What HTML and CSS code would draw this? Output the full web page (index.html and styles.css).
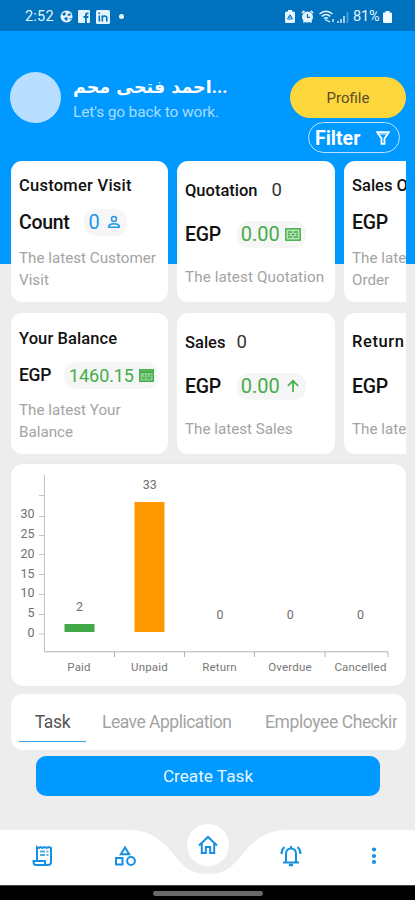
FILE: index.html
```html
<!DOCTYPE html>
<html lang="en">
<head>
<meta charset="utf-8">
<meta name="viewport" content="width=device-width, initial-scale=1">
<title>Dashboard</title>
<link rel="stylesheet" href="styles.css">
</head>
<body>
<div class="app">
  <div class="status">
    <span class="time">2:52</span>
    <svg class="st-globe" width="13" height="13" viewBox="0 0 13 13"><circle cx="6.500" cy="6.500" r="6" fill="#e4f4ff"/><path d="M2 4l3-2 1 2-2 2zM7 5l3-2 1 2-2 1zM4 8l3-1 1 2-2 2zM9.500 8l2 0-1 2z" fill="#0072bd"/></svg>
    <svg class="st-fb" width="12" height="13" viewBox="0 0 12 13"><rect width="12" height="13" rx="1" fill="#e4f4ff"/><path d="M7 13V8H5.500V6H7V4.500Q7 2.500 9 2.500h1.500v1.800H9.500q-.7 0-.7.7v1h1.700L10.200 8H8.800v5z" fill="#0072bd"/></svg>
    <svg class="st-in" width="14" height="14" viewBox="0 0 14 14"><rect width="14" height="14" rx="1.500" fill="#e4f4ff"/><path d="M3.300 5.500V11.500M3.300 2.500v1.600M6.300 11.500v-6M6.300 8q0-2 2.200-2T10.800 8v3.500" fill="none" stroke="#0072bd" stroke-width="1.600"/></svg>
    <span class="dot"></span>
    <span class="grow"></span>
    <svg class="st-saver" width="10" height="13" viewBox="0 0 10 13"><path d="M3 0h4v1.500h1.500Q10 1.500 10 3v8.500Q10 13 8.500 13h-7Q0 13 0 11.500V3Q0 1.500 1.500 1.500H3z" fill="#e4f4ff"/><path d="M2.500 9L5 4.800 7.500 9zM3.500 7h3" fill="none" stroke="#0072bd"/></svg>
    <svg class="st-alarm" width="13" height="13" viewBox="0 0 13 13"><circle cx="6.500" cy="7" r="5.500" fill="#e4f4ff"/><path d="M.8 3L3.400.8M12.200 3L9.600.8M2.500 12.500l1.500-2M10.500 12.500l-1.500-2" stroke="#e4f4ff" stroke-width="1.600"/><path d="M6.500 4v3.300H9" fill="none" stroke="#0072bd" stroke-width="1.200"/></svg>
    <svg class="st-wifi" width="15" height="13" viewBox="0 0 15 13"><path d="M.5 4Q7 -1.500 13.500 4M2.800 6.300Q7 2.800 11.200 6.300M5 8.500Q7 7 9 8.500" fill="none" stroke="#e4f4ff" stroke-width="1.500"/><path d="M6 9.500l5 2.500M14 9v3" stroke="#e4f4ff" stroke-width="1.300"/></svg>
    <svg class="st-signal" width="12" height="12" viewBox="0 0 12 12"><path d="M1 10v2M4 8v4M7 5v7" stroke="#cfeaff" stroke-width="1.500"/><path d="M10.500 1v11" stroke="#4fa6dc" stroke-width="1.500"/></svg>
    <span class="pct">81%</span>
    <svg class="st-batt" width="9" height="12" viewBox="0 0 9 12"><path d="M2.500 0h4v1.500H8q1 0 1 1V11q0 1-1 1H1q-1 0-1-1V2.500q0-1 1-1h1.500z" fill="#f2faff"/></svg>
  </div>

  <header class="header">
    <div class="avatar"></div>
    <div class="who">
      <div class="name">احمد فتحى محم<span class="more">...</span></div>
      <div class="hello">Let's go back to work.</div>
    </div>
    <div class="actions">
      <div class="profile">Profile</div>
      <div class="filter"><span>Filter</span><svg width="14" height="14" viewBox="0 0 14 14"><path d="M1.200 1.200h11.600L8.500 7.500v5.300h-3V7.500z" fill="none" stroke="#fff" stroke-width="1.800"/><path d="M3.500 3h7" stroke="#fff" stroke-width="1"/></svg></div>
    </div>
  </header>

  <section class="cards">
    <article class="card two">
      <h3 class="t-visit">Customer Visit</h3>
      <div class="row"><b class="count">Count</b><span class="pill blue p-count"><i>0</i><svg width="14" height="14" viewBox="0 0 14 14"><circle cx="7" cy="4" r="2.500" fill="none" stroke="currentColor" stroke-width="1.500"/><path d="M1.800 12.200v-1.400Q3 8.800 7 8.800t5.200 2v1.400z" fill="none" stroke="currentColor" stroke-width="1.500"/></svg></span></div>
      <p>The latest Customer<br>Visit</p>
    </article>
    <article class="card one">
      <h3>Quotation<em class="q">0</em></h3>
      <div class="row"><b>EGP</b><span class="pill p-amt"><i>0.00</i><svg width="16" height="13" viewBox="0 0 16 13"><rect x=".8" y=".8" width="14.400" height="11.400" fill="#b7e3b9" stroke="currentColor" stroke-width="1.400"/><path d="M3 4h4M8.500 4H13M3 6.500h2M6.500 6.500h3M11 6.500h2M3 9h4M8.500 9H13" stroke="currentColor" stroke-width="1.300"/></svg></span></div>
      <p class="p-quo">The latest Quotation</p>
    </article>
    <article class="card two">
      <h3>Sales Order</h3>
      <div class="row"><b>EGP</b></div>
      <p>The latest Sales<br>Order</p>
    </article>
    <article class="card two bal">
      <h3 class="t-bal">Your Balance</h3>
      <div class="row"><b class="egp-s">EGP</b><span class="pill p-bal"><i>1460.15</i><svg width="15" height="13" viewBox="0 0 15 13"><rect x=".7" y=".7" width="13.600" height="11.600" fill="#86cd89" stroke="currentColor" stroke-width="1.400"/><path d="M1 3h13" stroke="currentColor" stroke-width="2"/><path d="M3 9h3M5 6.500h1M8 6.500h1M8 9h4M11 6.500h1.500" stroke="currentColor" stroke-width="1.300"/></svg></span></div>
      <p class="p-up">The latest Your<br>Balance</p>
    </article>
    <article class="card one">
      <h3>Sales<em>0</em></h3>
      <div class="row"><b>EGP</b><span class="pill p-amt"><i>0.00</i><svg width="16" height="14" viewBox="0 0 16 14"><path d="M8 13V2M2.800 7L8 1.800 13.200 7" fill="none" stroke="currentColor" stroke-width="1.700"/></svg></span></div>
      <p>The latest Sales</p>
    </article>
    <article class="card one">
      <h3 class="t-ret">Return</h3>
      <div class="row"><b>EGP</b></div>
      <p>The latest Return</p>
    </article>
  </section>

  <section class="chart">
    <svg width="395" height="222" viewBox="0 0 395 222">
      <g stroke="#c4c4c4" fill="none">
        <path d="M33.500 11v177"/>
        <path d="M28 31.500h5M28 52.500h5M28 71.500h5M28 90.500h5M28 110.500h5M28 130.500h5M28 150.500h5M28 170h5"/>
        <path d="M33 187.800h344v5M103.500 188v5M173.500 188v5M243.500 188v5M314 188v5" stroke="#b3b3b3"/>
      </g>
      <rect x="53.500" y="160" width="30" height="8" fill="#43a847"/>
      <rect x="123.500" y="38" width="30" height="130" fill="#ff9800"/>
      <g class="axis" text-anchor="end">
        <text x="23.500" y="54">30</text><text x="23.500" y="74">25</text><text x="23.500" y="94">20</text><text x="23.500" y="113.700">15</text><text x="23.500" y="133">10</text><text x="23.500" y="153">5</text><text x="23.500" y="173">0</text>
      </g>
      <g class="vals" text-anchor="middle">
        <text x="68.500" y="147">2</text><text x="138.700" y="25">33</text><text x="209" y="155">0</text><text x="279.200" y="155">0</text><text x="349.500" y="155">0</text>
      </g>
      <g class="cats" text-anchor="middle">
        <text x="68" y="207">Paid</text><text x="138.500" y="207">Unpaid</text><text x="208.500" y="207">Return</text><text x="279" y="207">Overdue</text><text x="349.500" y="207">Cancelled</text>
      </g>
    </svg>
  </section>

  <nav class="tabs">
    <div class="tab active">Task</div>
    <div class="tab leave">Leave Application</div>
    <div class="tab emp">Employee Checkin</div>
  </nav>

  <div class="create">Create Task</div>

  <footer class="bottom">
    <svg width="415" height="65" viewBox="0 0 415 65">
      <path d="M0 10H128C147 10 158 17 169 29C181 43 187 54 208 54C229 54 235 43 247 29C258 17 269 10 288 10H415V65H0z" fill="#fff"/>
      <circle cx="208" cy="25" r="21" fill="#fff"/>
      <g fill="none" stroke="#1690e2" stroke-width="2">
        <path d="M37 40V27l1.500 1 2-1 2 1 2-1 2 1 2-1 2 1 .5-1V42q0 3-3 3H36q-2.500 0-2.500-3v-1H45v2q0 2 2.500 2"/>
        <path d="M40 31.500h5M40 35h5M46.500 31.500h2M46.500 35h2" stroke-width="2" opacity=".75"/>
        <path d="M125 27.500l-4.200 6.800h8.400z"/>
        <rect x="116" y="38" width="6.500" height="6.500"/>
        <circle cx="131" cy="41" r="3.900"/>
        <path d="M199 25.500l9-8.500 9 8.500M201.800 23.500V33h4v-6h4.400v6h4v-9.500"/>
        <path d="M283 42.500h16M286 42v-8q0-5.500 5-5.500t5 5.500v8M291 26v3M284.500 27q-3 2.500-3 7M297.500 27q3 2.500 3 7"/>
        <path d="M289 45h4" stroke-width="2.500"/>
      </g>
      <g fill="#1690e2"><circle cx="374" cy="29.500" r="2.100"/><circle cx="374" cy="36" r="2.100"/><circle cx="374" cy="42" r="2.100"/></g>
    </svg>
  </footer>
  <div class="gesture"><span></span></div>
</div>
</body>
</html>
```
FILE: styles.css
```css
* { box-sizing: border-box; }
body { margin: 0; font-family: Roboto, "Noto Sans", sans-serif; }
svg { display: block; flex: none; }
.app { width: 415px; height: 900px; overflow: hidden; display: flex; flex-direction: column; background: linear-gradient(#0099ff 264px, #ededed 264px); }
.app > * { flex: none; }

.status { height: 31px; background: #0072bd; display: flex; align-items: center; padding: 2px 23px 0 25px; color: #e4f4ff; }
.time { width: 35px; font-size: 14.5px; letter-spacing: .2px; white-space: nowrap; }
.st-fb { margin-left: 5px; }
.st-in { margin-left: 6px; }
.dot { width: 5px; height: 5px; border-radius: 50%; background: #e4f4ff; margin-left: 9px; }
.grow { flex: 1; }
.st-alarm { margin-left: 6px; }
.st-wifi { margin-left: 5px; }
.st-signal { margin-left: 3px; }
.pct { font-size: 14.5px; margin-left: 4px; width: 30px; letter-spacing: -.2px; }

.header { height: 130px; display: flex; padding: 41px 5px 0 10px; }
.avatar { width: 51px; height: 51px; border-radius: 50%; background: #b8dfff; }
.who { margin: 1px 0 0 11px; width: 214px; white-space: nowrap; }
.name { height: 27px; font: 700 17.5px/27px "DejaVu Sans", sans-serif; color: #fff; padding-left: 1px; }
.more { font-family: Roboto, sans-serif; font-size: 18px; letter-spacing: -.4px; }
.hello { line-height: 24px; font-size: 15.5px; color: #a9dcff; letter-spacing: -.15px; padding-left: 1px; }
.actions { display: flex; flex-direction: column; width: 120px; margin-top: 5px; }
.profile { width: 116px; height: 41px; margin-left: 4px; border-radius: 21px; background: #fdd63c; color: #5b4c2a; font-size: 15px; display: flex; align-items: center; justify-content: center; }
.filter { width: 92px; height: 31px; margin: 4px 0 0 22px; border: 1px solid #b8e2ff; border-radius: 16px; padding: 0 9px 0 6px; display: flex; align-items: center; justify-content: space-between; color: #fff; font-weight: 700; font-size: 19.5px; }
.who, .avatar, .actions { flex: none; }
.filter span { padding-top: 2px; }

.cards { width: 395px; margin-left: 11px; overflow: hidden; display: grid; grid-template-columns: 157px 158px 157px; column-gap: 9px; row-gap: 11px; }
.card { height: 141px; border-radius: 11px; background: #fff; padding: 0 8px; white-space: nowrap; }
.two { padding-top: 14px; }
.two.bal { padding-top: 15px; }
.one { padding-top: 18px; }
.card h3 { margin: 0; height: 22px; line-height: 22px; font-size: 16.5px; font-weight: 500; color: #111; }
.card .t-visit { letter-spacing: .25px; }
.card .t-bal { letter-spacing: .1px; }
.card .t-ret { letter-spacing: .6px; }
.card em { font-style: normal; font-weight: 400; font-size: 18.5px; margin-left: 11px; color: #333; }
.card em.q { margin-left: 14px; }
.row { height: 28px; display: flex; align-items: center; margin-top: 11px; }
.one .row { margin-top: 19px; }
.row b { font-size: 19.5px; font-weight: 500; color: #111; letter-spacing: -.3px; }
.row b.egp-s { font-size: 17.5px; }
.pill { height: 27px; border-radius: 12px; background: #f6f6f6; display: flex; align-items: center; justify-content: space-between; color: #45ad49; }
.pill.blue { color: #2299e8; }
.pill i { font-style: normal; font-size: 20px; }
.p-count { width: 43px; margin-left: 14px; padding: 0 6px 0 5px; }
.p-amt { width: 69px; margin-left: 16px; padding: 0 5px 0 4px; }
.p-bal { width: 94px; margin-left: 13px; padding: 0 4px 0 5px; }
.pill.p-bal i { font-size: 18px; letter-spacing: -.1px; }
.card p { margin: 11px 0 0; font-size: 15.2px; line-height: 22px; color: #a3a3a3; }
.card .p-up { margin-top: 10px; }
.card .p-quo { letter-spacing: .1px; }
.card.one p { margin-top: 18px; }

.chart { width: 395px; height: 222px; margin: 10px 0 0 11px; border-radius: 12px; background: #fff; box-shadow: 0 0 3px #e2e2e2; }
.axis, .vals { font-size: 12.5px; fill: #6f6f6f; }
.cats { font-size: 11.5px; fill: #777; letter-spacing: .2px; }

.tabs { width: 395px; height: 56px; margin: 8px 0 0 11px; border-radius: 12px; background: #fff; padding: 0 9px 0 8px; display: flex; overflow: hidden; white-space: nowrap; line-height: 56px; font-size: 17.5px; color: #a3a3a3; }
.tab { flex: none; }
.active { width: 67px; height: 48px; border-bottom: 1px solid #3a9fe4; color: #555; text-align: center; letter-spacing: -.3px; }
.leave { width: 129px; margin-left: 16px; letter-spacing: -.5px; }
.emp { width: 132px; margin-left: 34px; overflow: hidden; letter-spacing: -.4px; }

.create { width: 344px; height: 40px; margin: 6px 0 0 36px; border-radius: 10px; background: #0099ff; color: #e6f5ff; font-size: 17.2px; display: flex; align-items: center; justify-content: center; }
.bottom { height: 65px; margin-top: 24px; }
.gesture { height: 15px; background: #000; border-top: 1px solid #444; display: flex; align-items: center; justify-content: center; }
.gesture span { width: 110px; height: 5px; border-radius: 3px; background: #6a6a6a; }
```
